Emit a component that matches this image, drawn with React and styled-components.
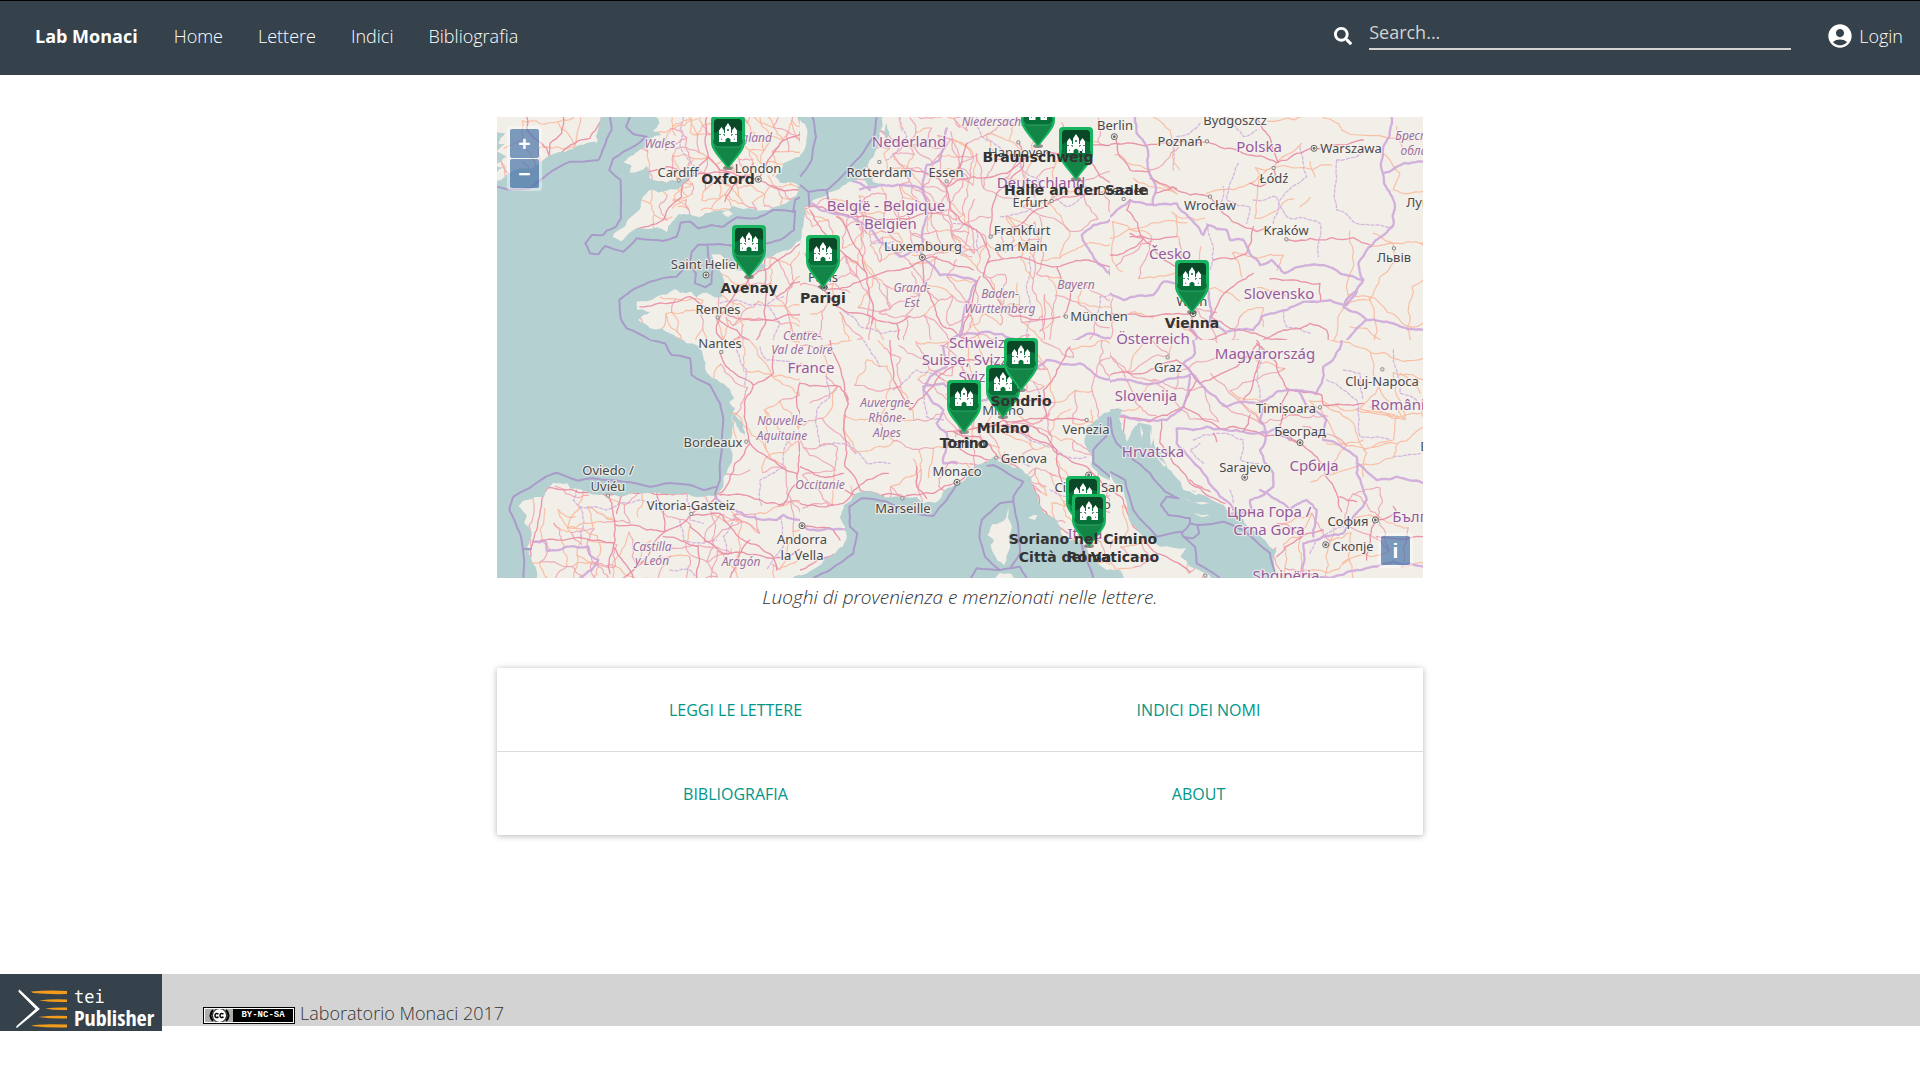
import React from "react";
import styled, { createGlobalStyle } from "styled-components";
import { FaSearch } from "react-icons/fa";
import { MdAccountCircle } from "react-icons/md";

const GlobalStyle = createGlobalStyle`
  * { box-sizing: border-box; }
  body {
    margin: 0;
    background: #fff;
    color: #333;
    font-family: "Open Sans", "Noto Sans", sans-serif;
    font-size: 18px;
    font-weight: 300;
    line-height: 24px;
  }
`;

/* ---------- header ---------- */

const Header = styled.header`
  display: flex;
  align-items: center;
  height: 75px;
  padding: 0 17px 4px 35px;
  background: #35424b;
  border-top: 1px solid #000;
  color: #fff;
`;

const Brand = styled.a`
  color: #fff;
  font-weight: 700;
  text-decoration: none;
`;

const Nav = styled.nav`
  display: flex;
  gap: 35px;
  margin-left: 36px;
`;

const NavLink = styled.a`
  color: #fff;
  text-decoration: none;
`;

const SearchForm = styled.form`
  display: flex;
  align-items: center;
  gap: 17px;
  margin-left: auto;
`;

const IconButton = styled.button`
  display: flex;
  padding: 0;
  border: 0;
  background: none;
  color: #fff;
`;

const SearchInput = styled.input`
  width: 422px;
  height: 32px;
  margin-bottom: 4px;
  padding: 0 0 3px;
  border: 0;
  border-bottom: 2px solid #d3d3d3;
  border-radius: 0;
  outline: 0;
  background: none;
  color: #fff;
  font: inherit;
  font-weight: 400;
  &::placeholder { color: #d3d3d3; opacity: 1; }
`;

const Login = styled.a`
  display: flex;
  align-items: center;
  gap: 5px;
  margin-left: 35px;
  color: #fff;
  text-decoration: none;
`;

/* ---------- page body ---------- */

const Main = styled.main`
  max-width: 926px;
  margin: 42px auto 0;
`;

const Figure = styled.figure`
  margin: 0;
`;

const Caption = styled.figcaption`
  padding-top: 7px;
  font-size: 19px;
  line-height: 25px;
  font-style: italic;
  text-align: center;
`;

const MapFrame = styled.div`
  position: relative;
  overflow: hidden;
  background: #b5d0d0;
`;

const MapDrawing = styled.svg`
  display: block;
  width: 100%;
`;

const ControlGroup = styled.div`
  position: absolute;
  display: flex;
  flex-direction: column;
  gap: 1px;
  padding: 3px;
  border-radius: 4px;
  background: rgba(255, 255, 255, 0.4);
  ${(p) => (p.$corner === "top-left" ? "top: 9px; left: 10px;" : "right: 10px; bottom: 10px;")}
`;

const ControlButton = styled.button`
  width: 29px;
  height: 29px;
  padding: 0;
  border: 0;
  border-radius: 2px;
  background: rgba(0, 60, 136, 0.5);
  color: #fff;
  font: 700 21px/27px "Liberation Sans", Arial, sans-serif;
  text-align: center;
`;

const Card = styled.section`
  display: grid;
  grid-template-columns: 1fr 1fr;
  margin-top: 58px;
  border-radius: 2px;
  background: #fff;
  box-shadow: 0 1px 6px rgba(0, 0, 0, 0.3);
`;

const CardLink = styled.a`
  padding: 30px 24px 29px 38px;
  color: #009688;
  font-size: 16px;
  font-weight: 400;
  text-align: center;
  text-decoration: none;
  text-transform: uppercase;
  &:nth-child(-n + 2) { border-bottom: 1px solid #dcdcdc; }
`;

/* ---------- footer ---------- */

const Footer = styled.footer`
  display: flex;
  align-items: flex-start;
  margin-top: 139px;
`;

const FooterBar = styled.div`
  display: flex;
  flex: 1;
  align-items: flex-end;
  height: 52px;
  background: #d3d3d3;
`;

const PublisherLink = styled.a`
  display: flex;
  align-items: center;
  gap: 6px;
  width: 162px;
  height: 57px;
  padding: 12px 0 0 15px;
  background: #35424b;
  color: #fff;
  text-decoration: none;
`;

const PublisherName = styled.span`
  display: flex;
  flex-direction: column;
`;

const Tei = styled.span`
  font: 400 17px/17px "DejaVu Sans Mono", monospace;
`;

const Publisher = styled.span`
  font: 700 22px/23px "Liberation Sans Narrow", "Open Sans Condensed", "DejaVu Sans Condensed", sans-serif;
`;

const License = styled.p`
  display: flex;
  align-items: center;
  gap: 5px;
  margin: 0 0 1px 41px;
`;

const Badge = styled.a`
  display: flex;
  align-items: center;
  width: 92px;
  height: 17px;
  margin-top: 5px;
  padding: 1px;
  border: 1px solid #000;
  background: #abb1aa;
  background-clip: content-box;
  box-shadow: inset 0 0 0 1px #fff;
  text-decoration: none;
`;

const BadgeText = styled.span`
  flex: 1;
  height: 13px;
  background: #000;
  color: #fff;
  font: 700 9px/13px "Liberation Mono", monospace;
  text-align: center;
`;

/* ---------- map data ---------- */

// Each tile covers 320 map pixels across and is described at three units a pixel.
const tileOrigins = [[-7, -7], [303, -7], [613, -7], [-7, 223], [303, 223], [613, 223]];

function randomSource(seed) {
  let s = seed;
  return () => {
    s = (s * 16807) % 2147483647;
    return s / 2147483647;
  };
}

const parse = (str) => str.trim().split(/\s+/).map((p) => p.split(",").map(Number));

// Breaks a polyline into short wandering pieces; no point strays over 10 units.
function roughen(points, seed, amount = 0.09, depth = 3) {
  const rnd = randomSource(seed * 7919 + 13);
  let pts = points;
  for (let d = 0; d < depth; d += 1) {
    const next = [pts[0]];
    for (let i = 1; i < pts.length; i += 1) {
      const [ax, ay] = pts[i - 1];
      const [bx, by] = pts[i];
      const len = Math.hypot(bx - ax, by - ay);
      if (len > 14) {
        const k = (rnd() - 0.5) * 2 * Math.min(amount, 10 / len);
        next.push([(ax + bx) / 2 - (by - ay) * k, (ay + by) / 2 + (bx - ax) * k]);
      }
      next.push(pts[i]);
    }
    pts = next;
  }
  return pts;
}

const toPath = (pts, close) =>
  "M" + pts.map(([x, y]) => `${x.toFixed(1)} ${y.toFixed(1)}`).join("L") + (close ? "Z" : "");

function networkPaths([x, y, w, h, step, keep, pinkShare], seed) {
  const rnd = randomSource(seed * 3571 + 101);
  const cols = Math.ceil(w / step) + 1;
  const rows = Math.ceil(h / step) + 1;
  const nodes = [];
  for (let r = 0; r < rows; r += 1) {
    for (let c = 0; c < cols; c += 1) {
      nodes.push([x + (c + (rnd() - 0.5) * 0.9) * step, y + (r + (rnd() - 0.5) * 0.9) * step]);
    }
  }
  const out = { pink: "", orange: "" };
  const link = (a, b) => {
    if (rnd() > keep) return;
    const d = toPath(roughen([a, b], Math.floor(rnd() * 9000) + 1, 0.16));
    if (rnd() < pinkShare) out.pink += d;
    else out.orange += d;
  };
  for (let r = 0; r < rows; r += 1) {
    for (let c = 0; c < cols; c += 1) {
      const n = nodes[r * cols + c];
      if (c + 1 < cols) link(n, nodes[r * cols + c + 1]);
      if (r + 1 < rows) link(n, nodes[(r + 1) * cols + c]);
      if (c + 1 < cols && r + 1 < rows && rnd() < 0.4) link(n, nodes[(r + 1) * cols + c + 1]);
    }
  }
  return out;
}

const tiles = [
  {
    flooded: true,
    shapes: [
      "-20,-20 345,-20 330,35 318,80 322,98 280,104 248,116 200,128 160,150 110,176 60,190 40,205 15,212 15,190 40,172 15,165 50,140 20,125 55,100 25,100 45,70 -20,60",
      "480,-20 498,20 508,40 488,62 515,75 470,95 465,112 430,136 400,155 425,168 420,188 470,168 478,205 530,218 570,212 597,196 572,232 530,242 480,240 458,262 448,300 410,335 402,352 368,380 392,394 418,368 442,355 500,352 530,366 546,335 566,312 600,312 628,322 668,304 710,300 730,288 790,296 850,292 920,255 925,226 870,218 855,200 870,185 880,160 930,140 958,95 950,50 922,25 940,-20",
      "696,310 716,300 730,312 714,322",
      "980,270 948,280 942,300 956,350 940,384 905,415 860,430 815,460 830,466 790,490 740,482 710,462 690,433 664,433 682,470 703,530 695,562 650,548 620,562 605,545 570,548 555,537 500,560 440,575 442,600 480,606 445,630 480,655 545,672 575,690 600,700 585,720 610,740 980,740",
    ],
    networks: [[560, 0, 400, 300, 38, 0.74, 0.22], [430, 240, 160, 140, 44, 0.5, 0.3], [430, 40, 130, 160, 60, 0.4, 0.2], [30, 20, 300, 160, 75, 0.5, 0.3], [440, 560, 260, 160, 62, 0.55, 0.2], [690, 440, 270, 280, 66, 0.7, 0.5]],
    roads: [
      "110,21 112,60 170,115 180,140", "220,21 215,70 180,100 176,140", "335,21 300,85 235,110 150,160",
      "650,21 645,90 655,140 610,190 580,220 575,260 545,285 520,330 430,365", "655,140 690,180 740,195 790,205 860,235 925,240",
      "790,160 760,205 720,245 705,275", "805,210 830,160 870,100 945,60", "450,190 530,170 600,200 720,190",
      "450,590 520,580 600,560 690,605 730,620 830,630 960,610", "830,430 825,520 828,630 800,690 740,720", "960,390 880,440 780,500 730,560 690,620",
      "683,625 740,660 790,700 830,720", "860,560 905,520 960,510", "690,620 680,670 715,720",
    ],
    borders: [],
    seaBorders: [
      "360,21 365,60 340,115 325,150 240,155 170,195 120,235 60,240 21,230", "420,21 408,50 430,72 470,80 430,110 370,145 358,180 392,210 393,325 378,350 350,362 340,375 305,375 286,400 300,430 325,433 345,408 400,425 440,385 520,393 560,380 572,338 600,335 625,355 665,345 700,350 740,322 800,325 850,300 910,305 915,270 955,245 960,235",
      "915,300 912,360 870,390 810,405 740,410 690,402 625,404 605,425 600,455 560,500 480,515 420,545 388,570 392,625 410,655 480,690 525,720", "652,404 655,440 668,480 664,520 645,532 615,520 618,490 600,470", "930,195 960,155",
    ],
    dashed: ["575,60 570,110 595,150 630,180", "400,237 450,222 540,235", "690,580 740,570 830,585 880,560", "830,585 870,640 850,690 880,720", "580,21 570,60"],
  },
  {
    shapes: [
      "-20,-20 255,-20 246,21 238,70 232,112 203,165 185,190 160,215 130,226 105,242 40,270 12,290 10,350 5,380 -10,430 -20,430 -20,135 0,135 15,115 22,60 0,30 -20,20",
      "190,205 220,198 218,215 245,222 205,228", "258,40 268,70 262,85 252,70",
    ],
    networks: [[170, 20, 300, 420, 42, 0.72, 0.72], [20, 270, 180, 440, 60, 0.7, 0.7], [200, 440, 300, 280, 66, 0.65, 0.65], [450, 20, 250, 350, 64, 0.6, 0.65], [500, 350, 220, 340, 56, 0.6, 0.68], [700, 20, 260, 700, 80, 0.58, 0.55]],
    roads: [
      "30,300 60,350 130,430 200,490 220,600 215,640", "70,535 130,600 200,615 290,640 330,620", "70,540 160,520 300,480 400,440 520,480", "200,490 160,400 110,320", "10,290 120,310 230,330 370,310 440,300",
      "330,180 400,200 440,230 450,300 540,370 570,440 550,500 590,560 640,620 780,620", "440,230 520,200 620,190 720,130 850,110 960,105", "655,97 670,170 590,250 570,380", "570,380 650,350 755,275 900,250 960,240", "560,460 660,440 770,470 810,540 790,620",
      "770,470 850,450 960,480", "830,60 840,130 900,200 960,240", "367,440 370,490 400,580 430,650 500,690", "500,100 480,170 440,230", "290,640 300,720", "540,500 510,600 480,680",
    ],
    borders: ["440,55 435,110 420,150 380,165 370,240 380,290 370,350 365,440 420,495 530,515 500,580 480,680", "210,240 160,215", "370,240 310,225 240,225 180,238", "370,420 300,440 260,410 215,360 130,315 60,300 12,270", "960,310 880,345 845,375 875,430 920,485 960,500", "450,690 560,665 650,690 690,700 830,690 870,670 960,690"],
    seaBorders: ["38,21 48,80 35,150 0,200", "230,21 222,80 180,140 125,200 80,240 25,245 0,225", "25,245 28,290", "80,240 85,268"],
    dashed: ["300,21 320,80 300,110 260,150", "210,360 215,400 280,395", "530,21 545,80 610,120 655,150", "660,170 720,210 700,290 600,320", "690,440 680,520 695,600 680,690", "130,600 180,650 240,670 300,660", "540,440 530,360 460,340", "860,250 800,290 760,260", "960,540 900,560 890,620"],
  },
  {
    shapes: [],
    networks: [[0, 340, 220, 170, 90, 0.4, 0.5], [0, 590, 460, 120, 80, 0.6, 0.7], [300, 420, 170, 80, 70, 0.45, 0.2], [450, 20, 500, 200, 150, 0.3, 0.1], [700, 380, 240, 330, 110, 0.4, 0.05], [0, 30, 220, 300, 110, 0.4, 0.4]],
    roads: [
      "0,103 140,103 290,95 400,130 500,158 560,130 612,115", "490,175 500,210 450,230 420,220", "612,115 690,105 760,90", "15,80 30,140 60,180 120,185", "135,250 190,230 240,255 300,260 340,310 400,350 440,365 470,350", "120,205 200,235", "440,21 470,70 490,120 505,158",
      "430,350 425,390 410,430 310,450", "530,390 600,385 730,383 780,405", "60,380 200,380", "100,385 50,300 60,270", "100,385 60,370", "100,385 40,430 0,435", "100,385 150,440 200,470",
      "300,620 360,655 460,680 530,690", "430,490 380,520 320,590 305,620", "250,610 240,660 275,690 350,670", "0,610 100,620 240,612", "460,690 520,660 600,640 650,660 655,690", "480,507 540,510 630,520 632,570",
    ],
    orange: ["130,21 180,60 190,150 210,180", "290,250 400,230 460,190 575,100", "820,130 870,190 850,240 940,245", "780,410 850,400 940,400", "790,370 850,400 860,450 810,500 780,570 710,580", "720,650 770,655 830,710", "860,50 880,120 940,130", "600,155 615,200", "570,290 600,262"],
    borders: ["75,21 80,70 110,110 118,190 138,240 130,285 60,270 0,320", "130,285 200,280 235,320 280,375 295,345 350,360 360,390 400,390 450,465 485,450 525,490 570,470 640,465 690,490 760,510", "845,21 838,80 820,110 822,220 855,290 850,345 790,400 745,460 760,510 710,585 660,570 580,575 530,600 455,620 430,660 345,665 300,635 295,540", "0,550 40,570 130,555 160,515 200,520", "760,510 740,540 700,590 770,630 850,640 940,660", "820,190 880,160 940,155", "770,630 720,680 690,710", "250,720 260,680 240,650"],
    seaBorders: [],
    dashed: ["270,40 240,70 200,80 190,180", "350,21 400,80 440,60", "385,160 360,220 350,270 420,290 410,340", "290,340 310,420 300,480", "570,110 590,200 510,270 490,340", "680,150 740,140 770,110", "680,150 680,300 740,340 850,350", "430,270 500,260 530,320 630,340 625,440", "330,290 340,230", "520,600 530,650 600,670"],
  },
  {
    flooded: true,
    shapes: [
      "570,-20 590,10 625,18 640,50 645,85 680,118 720,148 732,175 718,185 735,205 724,235 722,300 714,385 700,440 680,465 630,470 590,460 545,462 500,458 420,460 350,462 270,448 242,446 232,430 190,428 168,448 162,472 110,480 85,498 110,525 102,548 125,575 112,620 125,665 142,740 880,740 915,708 980,695 980,-20",
    ],
    waters: ["728,220 750,240 762,270 764,285 745,265 726,240"],
    networks: [[670, 0, 290, 460, 82, 0.5, 0.35], [110, 460, 240, 260, 50, 0.55, 0.5], [260, 470, 440, 250, 66, 0.55, 0.5], [660, 500, 300, 210, 78, 0.6, 0.65]],
    roads: [
      "690,35 720,90 790,135 765,180 770,260 780,310 830,350 920,400", "860,21 850,100 790,135", "930,21 940,110 920,190 935,240 930,340 920,430 880,495 830,490 760,465 690,465", "780,310 735,370 705,445 680,465 600,460 520,462 420,458 350,465 240,448", "680,470 640,500 525,575 470,570 375,555", "240,448 170,440 150,520 130,600 130,714", "355,470 375,560 370,620 360,700", "130,605 200,600 370,608", "370,620 430,714", "525,575 440,680 400,714", "525,575 520,500 500,460",
      "605,525 690,520 760,600 850,650 860,690", "600,560 700,640 850,655 960,620", "400,460 380,520", "620,714 625,620 520,590", "780,600 740,660 720,714",
    ],
    borders: ["674,465 690,485 735,510 770,530 860,540 880,525 935,540", "130,605 165,602 170,632 240,620 295,620 300,645 325,660 305,690 270,714"],
    seaBorders: ["480,0 525,10 545,45 600,55 605,105 660,135 690,190 700,240 690,420 674,465", "680,440 640,450 600,435 530,430 480,440 400,425 310,415 265,422 200,398 160,415 70,470 58,510 90,580 100,640 100,714", "95,627 125,627"],
    dashed: ["740,30 770,90 765,140", "810,21 830,60 960,80", "935,270 890,310 880,380 810,420 815,500", "260,450 250,480 275,510 270,600", "270,500 350,510 450,480 500,490", "570,540 580,600 640,610 680,600", "590,460 600,540 640,550", "740,520 700,590 710,640", "870,530 880,620 830,690", "540,690 600,690 620,714"],
  },
  {
    shapes: [
      "-20,705 50,682 75,655 105,640 128,620 138,600 136,570 120,532 132,495 165,462 210,452 250,470 310,475 350,470 370,490 405,488 435,450 472,430 500,412 540,372 580,350 620,372 660,385 692,410 698,445 715,480 725,510 770,540 790,590 850,610 872,650 920,690 980,700 980,740 -20,740",
      "980,205 940,212 905,225 885,242 860,258 853,300 872,340 875,380 905,410 980,450",
    ],
    islands: ["625,503 636,560 631,620 612,676 580,640 572,615 582,600 562,585 578,552 618,535", "580,740 600,698 635,702 650,740", "683,533 712,526 704,540"],
    networks: [[0, 0, 430, 460, 82, 0.55, 0.55], [370, 0, 300, 380, 74, 0.5, 0.6], [620, 220, 240, 340, 62, 0.5, 0.6], [660, 0, 300, 220, 80, 0.55, 0.65], [700, 420, 250, 270, 60, 0.5, 0.6]],
    roads: [
      "90,0 130,120 145,190 130,270 135,380 180,450 250,470", "270,0 280,120 330,210 380,160 440,90 520,60 620,80", "0,130 120,140 145,180", "265,400 200,420 130,490 60,500 0,490", "135,450 310,472 400,460 470,425 560,365", "460,275 540,290 590,345", "440,275 610,240 720,235 860,240", "460,300 500,340 570,360", "610,240 690,290 770,340 860,380 900,420 960,470", "700,260 770,330 790,440 830,540 870,620", "590,350 660,390 700,440 720,500 790,570 860,620", "740,235 730,150 770,90 810,20",
      "610,240 590,160 560,90", "350,380 350,440 380,475", "0,380 60,410 130,400", "0,560 100,570 120,600", "0,690 70,655 130,640",
    ],
    borders: ["430,20 440,80 390,110 370,150 400,190 430,210 410,250 440,280 430,370 470,370", "370,140 430,130 480,185 560,180 600,120 620,150", "620,150 700,100 740,60 840,70 880,100 960,120", "0,550 30,570 75,568 135,568"],
    seaBorders: ["470,430 440,480 400,528 330,515 260,485 185,475 148,500 150,560 172,580 160,640 90,690 40,714", "560,378 580,375 670,425 640,470 640,485 600,490 545,540 538,590 555,650 600,690 630,685 660,640 655,560 640,485", "600,690 530,685 512,714", "630,685 660,680 680,714", "925,230 925,280 880,330 880,370 930,410 960,420", "840,600 860,660 880,714"],
    dashed: ["80,110 90,170 50,210 60,320 130,310 200,370 270,370", "190,0 240,80", "280,150 350,90 430,120", "370,140 380,230 430,240", "510,370 560,380 640,360 690,380", "640,260 720,310 800,350 860,350", "720,190 700,120", "750,450 800,470 850,560"],
  },
  {
    shapes: [
      "-20,205 40,210 28,235 36,270 50,305 64,275 85,248 125,258 132,310 158,345 172,385 212,425 220,450 270,462 340,495 360,522 400,538 430,570 465,600 500,632 492,680 495,740 310,740 290,700 240,680 212,650 230,625 150,620 90,580 55,535 48,480 30,440 0,400 -20,390",
      "-20,688 30,690 55,740 -20,740",
    ],
    islands: ["90,255 100,280 95,300", "120,262 130,300 122,320", "130,340 170,376 162,380", "228,448 275,460 258,466", "220,475 300,490 270,493", "252,520 300,525 270,529"],
    networks: [[0, 0, 250, 220, 76, 0.55, 0.65], [300, 0, 260, 120, 110, 0.5, 0.6], [600, 180, 330, 200, 110, 0.55, 0.1], [650, 20, 290, 160, 110, 0.45, 0.1], [500, 520, 220, 190, 74, 0.6, 0.45], [240, 640, 240, 70, 46, 0.6, 0.7], [720, 470, 220, 150, 90, 0.4, 0.5], [0, 460, 70, 220, 56, 0.5, 0.5]],
    roads: [
      "440,0 450,20 440,90 400,180", "440,10 500,70 530,145 600,155 635,165 640,195 760,190", "0,105 100,100 200,60 240,90 270,130 380,80 440,15", "220,200 280,240 330,265 410,270 520,290 570,310 620,350 680,460 695,515", "220,200 120,245 30,230", "220,200 250,140 260,120", "535,150 515,190 510,255 560,305", "45,235 40,280", "155,245 150,310 190,370 240,430 300,470 345,490", "240,420 300,455", "0,440 40,480 70,560 140,640 240,695", "795,540 780,590 770,660", "795,540 860,520 850,500", "800,590 940,590", "690,470 740,485", "420,225 400,275", "310,280 320,305", "500,650 560,600 640,570",
    ],
    orange: ["870,100 930,160", "640,195 730,250 770,340 760,410", "760,330 850,300 860,230 930,220", "760,300 710,310 650,310", "860,230 780,200"],
    borders: ["695,0 675,50 640,80 635,130 620,160 560,150 500,155 440,190 350,200 280,140 245,100 220,70 255,40 250,0", "0,125 60,120 130,130 180,115 245,100", "240,110 220,200 170,240 60,235 20,225", "460,190 450,240 470,280 450,330 490,400 490,440 450,470 420,480 430,520 350,520", "200,265 250,270 290,260 380,270 460,275", "200,265 200,310 245,360 330,470 370,510", "560,150 600,210 650,240 640,300 710,330 740,350 740,400 770,480 720,550 700,580 640,590 580,610 580,700", "740,370 800,420 860,410 940,430", "450,450 520,490 540,510 590,480 620,510 610,590", "460,280 500,265 540,300", "580,700 660,714 740,690 800,680 850,665 940,680"],
    seaBorders: ["0,230 5,270 20,310 60,350 120,400 165,455 205,475 170,470 152,495 175,525 240,535 240,550 215,580 220,590 250,595 268,580 262,555 240,550 270,555 340,545 400,570 440,605 480,640 495,700", "0,395 45,420 70,510 140,590 215,575", "220,590 255,620 260,670 330,714"],
    dashed: ["250,300 330,280 400,300 390,360 450,370", "280,370 240,330 270,310", "360,450 370,490", "455,20 440,120 450,180", "700,90 750,100 760,180", "650,120 740,180 750,290 840,300", "850,30 870,160 930,190", "850,350 930,340", "600,640 620,600 700,560"],
  },
];

// [tile, text, centre x, middle y, kind]
const labels = [
  [0, "Wales", 511, 100, "region"], [0, "England", 780, 82, "region"],
  [0, "Cardiff", 565, 185, "city"], [0, "London", 805, 175, "city"],
  [0, "Saint Helier", 649, 461, "city"], [0, "Rennes", 683, 596, "city"], [0, "Nantes", 691, 699, "city"],
  [1, "Niedersach.", 578, 34, "region"], [1, "Nederland", 328, 97, "country"], [1, "Rotterdam", 237, 186, "city"],
  [1, "Essen", 438, 187, "city"], [1, "Hannover", 653, 125, "city"], [1, "Berlin", 945, 45, "city"],
  [1, "België - Belgique", 257, 288, "country"], [1, "- Belgien", 257, 341, "country"],
  [1, "Deutschland", 722, 218, "country"], [1, "Dresden", 969, 240, "city"], [1, "Erfurt", 690, 275, "city"],
  [1, "Frankfurt", 667, 359, "city"], [1, "am Main", 662, 408, "city"], [1, "Luxembourg", 369, 408, "city"],
  [1, "Paris", 70, 500, "city"], [1, "Grand-", 335, 531, "region"], [1, "Est", 336, 576, "region"],
  [1, "Baden-", 600, 550, "region"], [1, "Württemberg", 600, 595, "region"], [1, "Bayern", 827, 522, "region"],
  [1, "München", 898, 618, "city"], [1, "Centre-", 7, 674, "region"], [1, "Val de Loire", 5, 717, "region"],
  [2, "Bydgoszcz", 376, 31, "city"], [2, "Poznań", 211, 93, "city"], [2, "Polska", 447, 111, "country"],
  [2, "Warszawa", 724, 114, "city"], [2, "Łódź", 491, 204, "city"], [2, "Wrocław", 299, 286, "city"],
  [2, "Kraków", 528, 361, "city"], [2, "Česko", 181, 432, "country"], [2, "Львів", 851, 442, "city"],
  [2, "Луцьк", 945, 277, "city"], [2, "Брестская", 945, 76, "region"], [2, "область", 945, 120, "region"],
  [2, "Slovensko", 508, 552, "country"], [2, "Wien", 247, 573, "city"], [2, "Österreich", 129, 687, "country"],
  [3, "France", 963, 85, "country"], [3, "Nouvelle-", 875, 240, "region"], [3, "Aquitaine", 875, 284, "region"],
  [3, "Bordeaux", 669, 307, "city"], [3, "Oviedo /", 354, 390, "city"], [3, "Uviéu", 354, 438, "city"],
  [3, "Vitoria-Gasteiz", 604, 494, "city"], [3, "Castilla", 485, 617, "region"], [3, "y León", 485, 661, "region"],
  [3, "Aragón", 754, 663, "region"],
  [4, "Schweiz,", 536, 8, "country"], [4, "Suisse, Svizzera,", 534, 59, "country"], [4, "Svizra", 536, 112, "country"],
  [4, "Auvergne-", 260, 187, "region"], [4, "Rhône-", 260, 231, "region"], [4, "Alpes", 260, 275, "region"],
  [4, "Milano", 609, 210, "city"], [4, "Torino", 498, 310, "city"], [4, "Venezia", 858, 268, "city"],
  [4, "Genova", 672, 355, "city"], [4, "Monaco", 471, 393, "city"], [4, "Marseille", 309, 503, "city"],
  [4, "Occitanie", 60, 431, "region"], [4, "Andorra", 5, 597, "city"], [4, "la Vella", 5, 645, "city"],
  [4, "Città di San", 867, 442, "city"], [4, "Marino", 867, 492, "city"], [4, "Italia", 855, 582, "country"],
  [5, "Graz", 173, 81, "city"], [5, "Magyarország", 466, 43, "country"], [5, "Slovenija", 108, 168, "country"],
  [5, "Cluj-Napoca", 816, 124, "city"], [5, "Timișoara", 528, 204, "city"], [5, "România", 875, 195, "country"],
  [5, "Београд", 570, 273, "city"], [5, "București", 1016, 318, "city"], [5, "Hrvatska", 129, 336, "country"],
  [5, "Sarajevo", 405, 381, "city"], [5, "Србија", 612, 377, "country"], [5, "Црна Гора /", 478, 517, "country"],
  [5, "Crna Gora", 478, 570, "country"], [5, "София", 715, 543, "city"], [5, "България", 950, 532, "country"],
  [5, "Скопје", 728, 617, "city"], [5, "Shqipëria", 528, 708, "country"],
];

// [tile, x, y, isCapital]
const dots = [
  [0, 566, 211], [0, 805, 208, true], [0, 648, 495, true], [0, 683, 622], [1, 238, 156], [1, 440, 214],
  [1, 655, 97], [1, 943, 80, true], [1, 755, 273], [1, 572, 380], [1, 367, 442, true], [1, 72, 532, true], [1, 798, 620],
  [2, 291, 94], [2, 612, 115, true], [2, 491, 174], [2, 300, 260], [2, 529, 388], [2, 852, 415], [2, 41, 267],
  [2, 249, 611, true], [3, 694, 36], [3, 769, 305], [3, 354, 467], [3, 604, 522], [3, 936, 557, true],
  [4, 860, 240], [4, 589, 353], [4, 471, 427, true], [4, 307, 475], [4, 866, 405, true], [4, 535, 310],
  [5, 173, 52], [5, 817, 88], [5, 630, 202], [5, 570, 308, true], [5, 404, 412, true], [5, 796, 540, true],
  [5, 647, 614, true], [5, 286, 707],
];

// Pins are given by the tip of the marker.
const places = [
  { x: 231, y: 52, names: ["Oxford"] },
  { x: 252, y: 161, names: ["Avenay"] },
  { x: 326, y: 171, names: ["Parigi"] },
  { x: 541, y: 30, names: ["Braunschweig"] },
  { x: 579, y: 63, names: ["Halle an der Saale"] },
  { x: 695, y: 196, names: ["Vienna"] },
  { x: 506, y: 301, names: ["Milano"] },
  { x: 524, y: 274, names: ["Sondrio"] },
  { x: 467, y: 316, names: ["Torino"] },
  { x: 586, y: 412, names: ["Soriano nel Cimino"] },
  { x: 592, y: 430, names: ["Roma", "Città del Vaticano"] },
];

const labelStyles = {
  city: { fontSize: 13, fill: "#4a4a4c" },
  country: { fontSize: 15, fill: "#965a9c" },
  region: { fontSize: 12, fill: "#99709f", fontStyle: "italic" },
};

const FULL_TILE = "M-10 -10H980V750H-10Z";

function Tile({ tile, index }) {
  const [ox, oy] = tileOrigins[index];
  const outline = (s, i) => toPath(roughen(parse(s), index * 40 + i + 1, 0.13, 2), true);
  const line = (s, i) => toPath(roughen(parse(s), index * 90 + i + 3, 0.1));
  const nets = tile.networks.map((n, i) => networkPaths(n, index * 10 + i + 1));
  const sea = (tile.flooded ? FULL_TILE : "") + tile.shapes.map(outline).join("");
  return (
    <svg x={ox} y={oy} width="320" height={index < 3 ? 240 : 245} viewBox={`0 0 960 ${index < 3 ? 720 : 735}`}>
      <path d={FULL_TILE} fill="#f2efe9" />
      <g fill="none" strokeLinejoin="round" strokeLinecap="round">
        <path d={nets.map((n) => n.orange).join("") + (tile.orange || []).map(line).join("")} stroke="#f9b89c" strokeWidth="3.500" opacity="0.9" />
        <path d={tile.dashed.map(line).join("")} stroke="#d5b8dd" strokeWidth="4" strokeDasharray="9 6" />
        <path d={nets.map((n) => n.pink).join("")} stroke="#eda0b2" strokeWidth="3.500" opacity="0.85" />
        <path d={tile.roads.map(line).join("")} stroke="#e98aa1" strokeWidth="4" opacity="0.9" />
        <path d={tile.borders.map(line).join("")} stroke="#cda5d8" strokeWidth="7" opacity="0.85" />
      </g>
      <path d={sea} fill="#b5d0d0" fillRule="evenodd" />
      <path d={(tile.waters || []).map(outline).join("")} fill="#b5d0d0" />
      <path d={(tile.islands || []).map(outline).join("")} fill="#f2efe9" />
      <path d={tile.seaBorders.map((s, i) => toPath(roughen(parse(s), i + 5, 0.04, 2))).join("")} fill="none" stroke="#a99bc9" strokeWidth="6" strokeLinejoin="round" />
    </svg>
  );
}

function Pin({ x, y }) {
  return (
    <g transform={`translate(${x - 17} ${y - 53})`}>
      <ellipse cx="17" cy="52" rx="5" ry="2" fill="#333" opacity="0.5" />
      <path d="M4 0H30Q34 0 34 4V26C34 34 28 39 17 53C6 39 0 34 0 26V4Q0 0 4 0Z" fill="#18b560" />
      <path d="M2 24H32C32 33 26 38 17 51C8 38 2 33 2 24Z" fill="#138546" />
      <rect x="3" y="3" width="28" height="28" rx="4" fill="#087039" />
      <path d="M3 9V7Q3 3 7 3H27Q31 3 31 7V15Q17 10 3 17Z" fill="#0a4927" />
      <path d="M3 28Q4 31 7 31H27Q30 31 31 28" fill="none" stroke="#28a564" />
      <path d="M8 26V14.500L10.500 11L13 14.500V17H14V11.500L17 7L20 11.500V17H21V14.500L23.500 11L26 14.500V26H19.500V23.500Q17 20 14.500 23.500V26Z" fill="#fff" />
      <path d="M8 18.500H10M12 18.500H13M21 18.500H22M24 18.500H26M16.500 13V15M17.500 13V15" stroke="#0b5a30" opacity="0.7" />
      <path d="M13.500 18V20M20.500 18V20M10.500 22.500V24M23.500 22.500V24" stroke="#0b5a30" opacity="0.6" />
    </g>
  );
}

function PlacesMap() {
  return (
    <MapFrame>
      <MapDrawing viewBox="0 0 926 461" role="img" aria-label="Mappa dei luoghi">
        {tiles.map((tile, i) => <Tile key={i} tile={tile} index={i} />)}
        {dots.map(([t, x, y, capital], i) => (
          <g key={i} transform={`translate(${tileOrigins[t][0] + x / 3} ${tileOrigins[t][1] + y / 3})`} fill="#f2efe9" stroke="#666">
            {capital ? <><circle r="3" /><circle r="1" fill="#666" /></> : <rect x="-1.5" y="-1.5" width="3" height="3" rx="0.5" stroke="#888" />}
          </g>
        ))}
        <g fontFamily='"Noto Sans", "Open Sans", sans-serif' fontWeight="400" textAnchor="middle" stroke="#f6f3ef" strokeOpacity="0.75" strokeWidth="2.5" strokeLinejoin="round" paintOrder="stroke">
          {labels.map(([t, text, x, y, kind]) => (
            <text key={text} x={Math.round(tileOrigins[t][0] + x / 3)} y={Math.round(tileOrigins[t][1] + y / 3) + 5} {...labelStyles[kind]}>{text}</text>
          ))}
        </g>
        {places.map((p) => <Pin key={p.names[0]} x={p.x} y={p.y} />)}
        <g fontFamily='"DejaVu Sans", Verdana, sans-serif' fontSize="14" fontWeight="700" fill="#333" textAnchor="middle">
          {places.flatMap((p) => p.names.map((n) => <text key={n} x={p.x} y={p.y + 15}>{n}</text>))}
        </g>
      </MapDrawing>
      <ControlGroup $corner="top-left">
        <ControlButton type="button" title="Zoom in">+</ControlButton>
        <ControlButton type="button" title="Zoom out">−</ControlButton>
      </ControlGroup>
      <ControlGroup $corner="bottom-right">
        <ControlButton type="button" title="Attributions">i</ControlButton>
      </ControlGroup>
    </MapFrame>
  );
}

function PublisherMark() {
  return (
    <svg width="53" height="40" viewBox="0 0 53 40" aria-hidden="true">
      <path d="M4.500 1.500L24 20L1.500 38.500L2.500 37L21.500 20L4 2.500Z" fill="#fff" stroke="#fff" strokeWidth="1.200" />
      <g fill="#f39c1c">
        <path d="M16 2.500Q34 1 52 2V5Q34 5.500 18 4Z" />
        <path d="M24 11.500Q38 9.500 52 10.500V13Q38 13.500 24 11.500Z" />
        <path d="M30 19.500Q40 18 52 18.500V21Q40 21.500 30 19.500Z" />
        <path d="M23 28Q38 26 52 27V29.500Q38 30 23 28Z" />
        <path d="M16 37Q20 34.500 52 35.500V38.500Q34 39 16 37Z" />
      </g>
    </svg>
  );
}

const sections = ["Leggi le lettere", "Indici dei nomi", "Bibliografia", "About"];

export default function App() {
  return (
    <>
      <GlobalStyle />
      <Header>
        <Brand href="#">Lab Monaci</Brand>
        <Nav>
          {["Home", "Lettere", "Indici", "Bibliografia"].map((item) => (
            <NavLink key={item} href={`#${item.toLowerCase()}`}>{item}</NavLink>
          ))}
        </Nav>
        <SearchForm role="search">
          <IconButton type="button" aria-label="Search"><FaSearch size={18} /></IconButton>
          <SearchInput type="text" placeholder="Search..." aria-label="Search" />
        </SearchForm>
        <Login href="#login"><MdAccountCircle size={28} />Login</Login>
      </Header>
      <Main>
        <Figure>
          <PlacesMap />
          <Caption>Luoghi di provenienza e menzionati nelle lettere.</Caption>
        </Figure>
        <Card>
          {sections.map((title) => <CardLink key={title} href="#">{title}</CardLink>)}
        </Card>
      </Main>
      <Footer>
        <PublisherLink href="#">
          <PublisherMark />
          <PublisherName>
            <Tei>tei</Tei>
            <Publisher>Publisher</Publisher>
          </PublisherName>
        </PublisherLink>
        <FooterBar>
          <License>
            <Badge href="#license">
              <svg width="28" height="13" viewBox="0 0 28 13" aria-hidden="true">
                <path d="M8 1Q3 6.500 8 12M21 1Q26 6.500 21 12" fill="none" stroke="#000" strokeWidth="2" />
                <circle cx="14.500" cy="6.500" r="7" fill="#fff" stroke="#000" />
                <path d="M13.500 5Q10 3.500 10 6.500T13.500 8M18.500 5Q15 3.500 15 6.500T18.500 8" fill="none" stroke="#000" strokeWidth="1.500" />
              </svg>
              <BadgeText>BY-NC-SA</BadgeText>
            </Badge>
            Laboratorio Monaci 2017
          </License>
        </FooterBar>
      </Footer>
    </>
  );
}
